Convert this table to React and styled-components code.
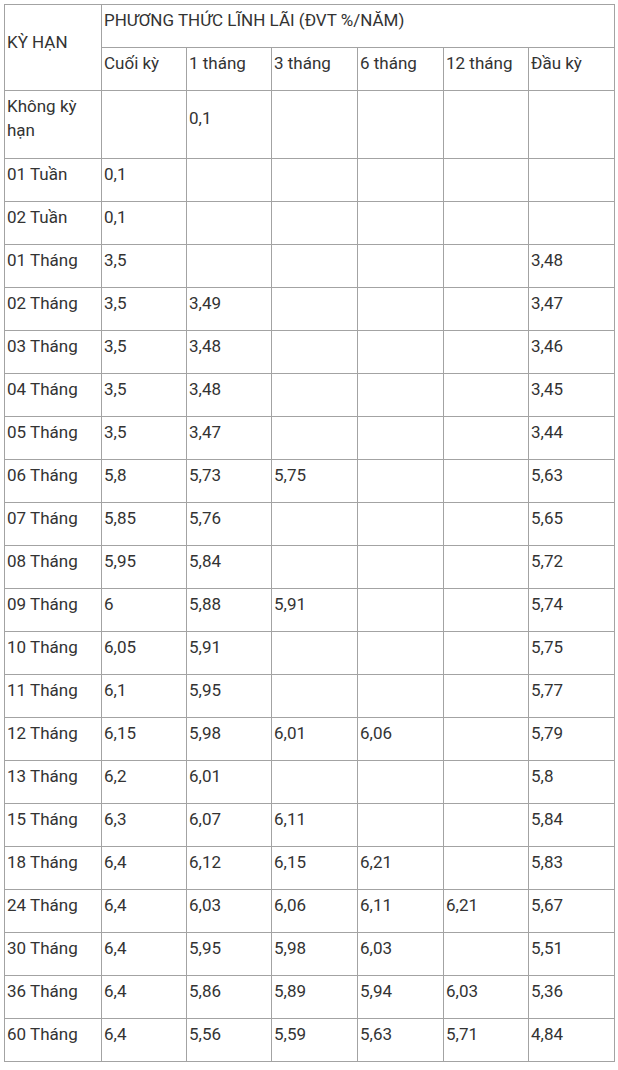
import React from "react";
import styled, { createGlobalStyle } from "styled-components";

const GlobalStyle = createGlobalStyle`
  html, body {
    margin: 0;
    padding: 0;
    background: #fff;
  }
`;

const Page = styled.div`
  padding: 4px;
  width: 618px;
  box-sizing: border-box;
  font-family: Roboto, "Liberation Sans", Arial, sans-serif;
  color: #333;
`;

const Table = styled.table`
  border-collapse: collapse;
  table-layout: fixed;
  width: 610px;
  font-size: 17px;
  line-height: 24px;
`;

const Cell = styled.td`
  border: 1px solid #a3a3a3;
  padding: 3px 2px 15px;
  vertical-align: middle;
  text-align: left;
  font-weight: 400;
  overflow: hidden;
`;

const HeadCell = styled(Cell).attrs({ as: "th" })``;

const TallCell = styled(Cell)`
  padding-bottom: 16px;
`;

const terms = [
  ["01 Tuần", "0,1", "", "", "", "", ""],
  ["02 Tuần", "0,1", "", "", "", "", ""],
  ["01 Tháng", "3,5", "", "", "", "", "3,48"],
  ["02 Tháng", "3,5", "3,49", "", "", "", "3,47"],
  ["03 Tháng", "3,5", "3,48", "", "", "", "3,46"],
  ["04 Tháng", "3,5", "3,48", "", "", "", "3,45"],
  ["05 Tháng", "3,5", "3,47", "", "", "", "3,44"],
  ["06 Tháng", "5,8", "5,73", "5,75", "", "", "5,63"],
  ["07 Tháng", "5,85", "5,76", "", "", "", "5,65"],
  ["08 Tháng", "5,95", "5,84", "", "", "", "5,72"],
  ["09 Tháng", "6", "5,88", "5,91", "", "", "5,74"],
  ["10 Tháng", "6,05", "5,91", "", "", "", "5,75"],
  ["11 Tháng", "6,1", "5,95", "", "", "", "5,77"],
  ["12 Tháng", "6,15", "5,98", "6,01", "6,06", "", "5,79"],
  ["13 Tháng", "6,2", "6,01", "", "", "", "5,8"],
  ["15 Tháng", "6,3", "6,07", "6,11", "", "", "5,84"],
  ["18 Tháng", "6,4", "6,12", "6,15", "6,21", "", "5,83"],
  ["24 Tháng", "6,4", "6,03", "6,06", "6,11", "6,21", "5,67"],
  ["30 Tháng", "6,4", "5,95", "5,98", "6,03", "", "5,51"],
  ["36 Tháng", "6,4", "5,86", "5,89", "5,94", "6,03", "5,36"],
  ["60 Tháng", "6,4", "5,56", "5,59", "5,63", "5,71", "4,84"],
];

const methods = ["Cuối kỳ", "1 tháng", "3 tháng", "6 tháng", "12 tháng", "Đầu kỳ"];
const widths = [97, 85, 85, 86, 86, 85, 86];

export default function App() {
  return (
    <Page>
      <GlobalStyle />
      <Table>
        <colgroup>
          {widths.map((w, i) => (
            <col key={i} style={{ width: w }} />
          ))}
        </colgroup>
        <thead>
          <tr>
            <HeadCell rowSpan={2}>KỲ HẠN</HeadCell>
            <HeadCell colSpan={6}>PHƯƠNG THỨC LĨNH LÃI (ĐVT %/NĂM)</HeadCell>
          </tr>
          <tr>
            {methods.map((m) => (
              <HeadCell key={m}>{m}</HeadCell>
            ))}
          </tr>
        </thead>
        <tbody>
          <tr>
            <TallCell>Không kỳ hạn</TallCell>
            <TallCell />
            <TallCell>0,1</TallCell>
            <TallCell />
            <TallCell />
            <TallCell />
            <TallCell />
          </tr>
          {terms.map((row) => (
            <tr key={row[0]}>
              {row.map((v, i) => (
                <Cell key={i}>{v}</Cell>
              ))}
            </tr>
          ))}
        </tbody>
      </Table>
    </Page>
  );
}
